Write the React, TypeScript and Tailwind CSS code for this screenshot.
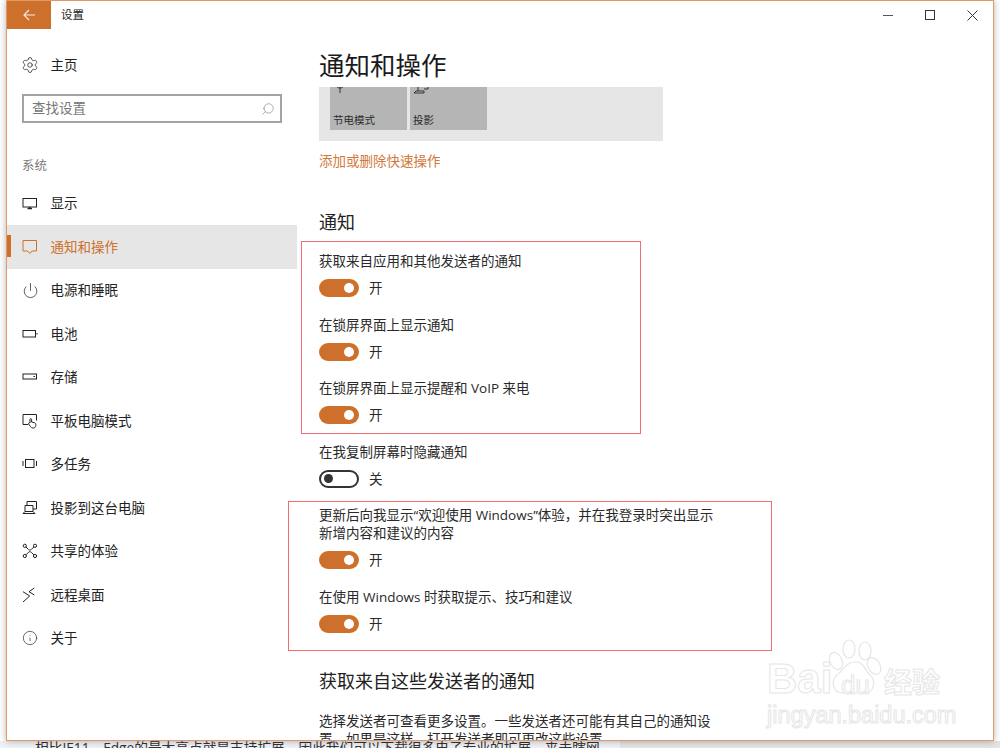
import React from 'react';
import { Info, Power, Search, Settings } from 'lucide-react';

const orange = 'bg-[#cd702b]';

const Glyph = ({ children, className = 'text-[#222]' }: { children: React.ReactNode; className?: string }) => (
  <svg width="16" height="16" viewBox="0 0 16 16" fill="none" stroke="currentColor" strokeWidth="1" className={className}>
    {children}
  </svg>
);

const navItems: { label: string; icon: React.ReactNode; active?: boolean }[] = [
  {
    label: '显示',
    icon: (
      <Glyph>
        <rect x="1" y="3.5" width="13.5" height="8.5" />
        <path d="M5.5 13.5h4.5M7.7 12v1" strokeWidth="1.5" />
      </Glyph>
    ),
  },
  {
    label: '通知和操作',
    active: true,
    icon: (
      <Glyph className="text-[#cd702b]">
        <path d="M1 1.5h13.5v10.5h-4.5l-2.2 2.5-2.3-2.5h-4.5z" />
      </Glyph>
    ),
  },
  { label: '电源和睡眠', icon: <Power size={17} strokeWidth={1} className="text-[#222] shrink-0" /> },
  {
    label: '电池',
    icon: (
      <Glyph>
        <rect x="1" y="4.5" width="12.5" height="6.5" />
        <path d="M15 7v1.5" />
      </Glyph>
    ),
  },
  {
    label: '存储',
    icon: (
      <Glyph>
        <rect x="1" y="5" width="13.5" height="5" />
        <path d="M11.5 7.5h1.5" />
      </Glyph>
    ),
  },
  {
    label: '平板电脑模式',
    icon: (
      <Glyph>
        <path d="M6 11.5H1V1.5h13.5v6" />
        <path d="M8 10V6.5c0-1.2 1.6-1.2 1.6 0V9l2.6.6c1 .3 1.6.9 1.6 2v1c0 1.3-1 2.4-2.6 2.4H11c-1.3 0-2-.7-2.6-1.6L6.6 11c-.5-.8.6-1.6 1.4-1z" />
      </Glyph>
    ),
  },
  {
    label: '多任务',
    icon: (
      <Glyph>
        <rect x="3.5" y="3.5" width="8.5" height="8" />
        <path d="M1 5v5M14.5 5v5" />
      </Glyph>
    ),
  },
  {
    label: '投影到这台电脑',
    icon: (
      <Glyph>
        <path d="M5 5V1.5h9.5v7.5H11" />
        <path d="M3 5.5h8v6H3zM1 13.5h12L11 11.5H3z" />
      </Glyph>
    ),
  },
  {
    label: '共享的体验',
    icon: (
      <Glyph>
        <circle cx="2.8" cy="2.8" r="1.6" />
        <circle cx="13" cy="2.8" r="1.6" />
        <circle cx="2.8" cy="13" r="1.6" />
        <circle cx="13" cy="13" r="1.6" />
        <path d="M4 4l2.5 2.5c.8.8 2 .8 2.8 0L11.8 4M4 11.8l2.5-2.5c.8-.8 2-.8 2.8 0l2.5 2.5" />
      </Glyph>
    ),
  },
  {
    label: '远程桌面',
    icon: (
      <Glyph>
        <path d="M1 4.7L7.7 9 1 15M12.3 1L7 4.7 12.3 8" />
      </Glyph>
    ),
  },
  { label: '关于', icon: <Info size={16} strokeWidth={1} className="text-[#222] shrink-0" /> },
];

const Setting = ({ label, on = true }: { label: React.ReactNode; on?: boolean }) => (
  <div className="pb-[17.5px]">
    <div className="w-[400px] text-[13.5px] leading-[18px] py-px text-[#2a2a2a]">{label}</div>
    <div className="mt-2 h-[18px] flex items-center">
      {on ? (
        <div className={`w-10 h-[18px] rounded-full ${orange} flex items-center justify-end pr-[5px]`}>
          <div className="w-[10px] h-[10px] rounded-full bg-white" />
        </div>
      ) : (
        <div className="w-10 h-[18px] rounded-full border-2 border-[#333] flex items-center pl-[3px]">
          <div className="w-[9px] h-[9px] rounded-full bg-[#333]" />
        </div>
      )}
      <span className="ml-[10px] text-[13.5px] leading-[18px] text-[#2a2a2a]">{on ? '开' : '关'}</span>
    </div>
  </div>
);

const Watermark = () => (
  <div className="absolute left-[765px] top-[638px] w-[185px] h-[92px] select-none">
    <svg width="60" height="64" viewBox="0 0 60 64" fill="#fff" stroke="#e6e6e6" strokeWidth="1.2" className="absolute left-[58px] top-0">
      <ellipse cx="13" cy="23" rx="6" ry="9" transform="rotate(-25 13 23)" />
      <ellipse cx="26" cy="11" rx="6" ry="9" />
      <ellipse cx="42" cy="13" rx="6" ry="9" />
      <ellipse cx="51" cy="28" rx="6" ry="9" transform="rotate(-30 51 28)" />
      <path d="M33 24c8 0 9 9 14 13 6 5 5 18-6 18H20c-11 0-12-13-6-18 6-4 8-13 19-13z" />
    </svg>
    <span className="absolute left-[2px] top-[16px] text-[42px] leading-[50px] font-bold text-white [-webkit-text-stroke:1px_#e6e6e6] [font-family:'Liberation_Sans',sans-serif]">Bai</span>
    <span className="absolute left-[76px] top-[32px] text-[26px] leading-[30px] text-white [-webkit-text-stroke:1px_#e6e6e6] [font-family:'Liberation_Sans',sans-serif]">du</span>
    <span className="absolute left-[119px] top-[26px] text-[28px] leading-[36px] font-bold text-white [-webkit-text-stroke:1px_#e6e6e6]">经验</span>
    <span className="absolute left-[2px] top-[62px] text-[23.5px] leading-[30px] text-white [-webkit-text-stroke:1px_#e6e6e6] [font-family:'Liberation_Sans',sans-serif]">jingyan.baidu.com</span>
  </div>
);

export default function App() {
  return (
    <div className="relative w-[1000px] h-[748px] overflow-hidden bg-white [font-family:'Open_Sans','Noto_Sans_CJK_SC',sans-serif]">
      <div className="relative z-10 ml-[6px] w-[988px] h-[741px] bg-white border border-[#e09a66] shadow-[0_0_7px_rgba(0,0,0,0.3)] overflow-hidden flex flex-col">
        {/* Title bar */}
        <div className="h-7 shrink-0 flex items-center">
          <div className={`w-11 h-7 ${orange} flex items-center justify-center`}>
            <svg width="14" height="14" viewBox="0 0 14 14" fill="none" stroke="#fbe9dc" strokeWidth="1.2">
              <path d="M13 7H2M7 2L2 7l5 5" />
            </svg>
          </div>
          <span className="ml-[10px] text-[11.5px] text-[#222]">设置</span>
          <div className="ml-auto flex items-center text-[#333]">
            <div className="w-[42px] h-7 flex items-center justify-center">
              <div className="w-[10px] h-px bg-[#555]" />
            </div>
            <div className="w-[42px] h-7 flex items-center justify-center">
              <div className="w-[10px] h-[10px] border border-[#333]" />
            </div>
            <div className="w-[42px] h-7 flex items-center justify-center">
              <svg width="11" height="11" viewBox="0 0 11 11" stroke="#333" strokeWidth="1">
                <path d="M.5.5l10 10M10.5.5l-10 10" />
              </svg>
            </div>
          </div>
        </div>

        <div className="flex flex-1 min-h-0">
          {/* Sidebar */}
          <div className="w-[290px] shrink-0 pt-[21px]">
            <div className="h-[30px] flex items-center pl-[15px] text-[13.5px] text-[#222]">
              <div className="w-4 h-4 flex items-center justify-center">
                <Settings size={18} strokeWidth={1} className="text-[#222] shrink-0" />
              </div>
              <span className="ml-[12.5px]">主页</span>
            </div>
            <div className="ml-[15px] mt-[14px] w-[260px] h-[29px] border-2 border-[#a3a3a3] flex items-center justify-between pl-2 pr-[5px] text-[13.5px] text-[#777]">
              <span>查找设置</span>
              <Search size={14} strokeWidth={1} className="text-[#777] -scale-x-100" />
            </div>
            <div className="ml-[15px] mt-[33px] h-5 leading-5 text-[12.5px] text-[#777]">系统</div>
            <div className="mt-[5.5px]">
              {navItems.map((item) => (
                <div
                  key={item.label}
                  className={`relative h-[43.5px] flex items-center pl-[15px] text-[13.5px] ${item.active ? 'bg-[#e6e6e6] text-[#cd702b]' : 'text-[#222]'}`}
                >
                  {item.active && <div className={`absolute left-0 top-[10px] w-1 h-[22px] ${orange}`} />}
                  <div className="w-4 h-4 flex items-center justify-center">{item.icon}</div>
                  <span className="ml-[12.5px]">{item.label}</span>
                </div>
              ))}
            </div>
          </div>

          {/* Content */}
          <div className="flex-1 pl-[22px] overflow-hidden">
            <div className="h-[58px] flex items-end pb-1">
              <h1 className="text-[25.5px] leading-9 text-[#1a1a1a]">通知和操作</h1>
            </div>

            <div className="w-[344px] h-[54px] bg-[#e6e6e6] pl-[11px] flex gap-[3px]">
              <div className="relative w-[77px] h-[43px] bg-[#b5b5b5] overflow-hidden">
                <svg width="12" height="12" viewBox="0 0 12 12" fill="none" stroke="#333" className="absolute left-[4px] -top-[6px]">
                  <path d="M6 4v8M2 3c0 3 2 4 4 4s4-1 4-4" />
                </svg>
                <span className="absolute left-[3px] bottom-[2px] text-[10.5px] leading-[16px] text-[#2a2a2a]">节电模式</span>
              </div>
              <div className="relative w-[77px] h-[43px] bg-[#b5b5b5] overflow-hidden">
                <svg width="16" height="12" viewBox="0 0 16 12" fill="none" stroke="#333" className="absolute left-[3px] -top-[4px]">
                  <path d="M5 2v6M15 2v4h-4M1 10h10V8H3z" />
                </svg>
                <span className="absolute left-[3px] bottom-[2px] text-[10.5px] leading-[16px] text-[#2a2a2a]">投影</span>
              </div>
            </div>

            <div className="mt-[10px] h-5 leading-5 text-[13.5px] text-[#d2783a]">添加或删除快速操作</div>
            <h2 className="mt-[39px] text-[18px] leading-6 text-[#222]">通知</h2>

            <div className="mt-[17px]">
              <Setting label="获取来自应用和其他发送者的通知" />
              <Setting label="在锁屏界面上显示通知" />
              <Setting label="在锁屏界面上显示提醒和 VoIP 来电" />
              <Setting label="在我复制屏幕时隐藏通知" on={false} />
              <Setting label="更新后向我显示“欢迎使用 Windows”体验，并在我登录时突出显示新增内容和建议的内容" />
              <Setting label="在使用 Windows 时获取提示、技巧和建议" />
            </div>

            <h2 className="mt-[19px] text-[18px] leading-6 text-[#222]">获取来自这些发送者的通知</h2>
            <p className="mt-[19px] w-[400px] text-[13.5px] leading-[18px] text-[#2a2a2a]">
              选择发送者可查看更多设置。一些发送者还可能有其自己的通知设置。如果是这样，打开发送者即可更改这些设置。
            </p>
          </div>
        </div>
      </div>

      {/* Annotation boxes */}
      <div className="absolute z-20 left-[301px] top-[241px] w-[340px] h-[193px] border border-[#f26d6d]" />
      <div className="absolute z-20 left-[288px] top-[501px] w-[484px] h-[150px] border border-[#f26d6d]" />
      <div className="absolute z-20 inset-0 pointer-events-none">
        <Watermark />
      </div>

      {/* Page behind the window */}
      <div className="flex h-[7px] overflow-hidden">
        <div className="w-[620px] bg-[#eef1f6] pl-[35px] overflow-hidden">
          <div className="-mt-[3px] whitespace-nowrap text-[13.7px] leading-5 text-[#333]">
            相比IE11，Edge的最大亮点就是支持扩展，因此我们可以下载很多电子专业的扩展，来去瞎网
          </div>
        </div>
        <div className="flex-1 bg-[#e4e4e4]" />
      </div>
    </div>
  );
}
